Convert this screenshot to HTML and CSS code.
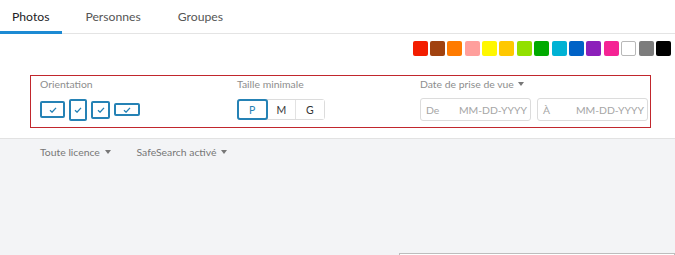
FILE: index.html
```html
<!DOCTYPE html>
<html lang="fr">
<head>
    <meta charset="UTF-8">
    <title>Recherche - Photos</title>
    <link rel="stylesheet" href="styles.css">
</head>
<body>

    <nav class="tabs">
        <a href="#" class="tab active">Photos</a>
        <a href="#" class="tab">Personnes</a>
        <a href="#" class="tab">Groupes</a>
    </nav>

    <!-- Color filter -->
    <div class="colors">
        <span class="swatch" style="background:#f31d00"></span>
        <span class="swatch" style="background:#a1420f"></span>
        <span class="swatch" style="background:#ff7b00"></span>
        <span class="swatch" style="background:#ff9f9c"></span>
        <span class="swatch" style="background:#fff700"></span>
        <span class="swatch" style="background:#ffc800"></span>
        <span class="swatch" style="background:#92e000"></span>
        <span class="swatch" style="background:#00aa00"></span>
        <span class="swatch" style="background:#00b2d4"></span>
        <span class="swatch" style="background:#0062c6"></span>
        <span class="swatch" style="background:#8c20ba"></span>
        <span class="swatch" style="background:#f52394"></span>
        <span class="swatch swatch-white"></span>
        <span class="swatch" style="background:#7c7c7c"></span>
        <span class="swatch" style="background:#000000"></span>
    </div>

    <!-- Advanced filters -->
    <div class="filters">
        <div class="group">
            <div class="label">Orientation</div>
            <div class="controls">
                <span class="orient landscape"><svg class="check" viewBox="0 0 9 7"><path d="M1 3.8 L3.4 6 L8 1"/></svg></span>
                <span class="orient portrait"><svg class="check" viewBox="0 0 9 7"><path d="M1 3.8 L3.4 6 L8 1"/></svg></span>
                <span class="orient square"><svg class="check" viewBox="0 0 9 7"><path d="M1 3.8 L3.4 6 L8 1"/></svg></span>
                <span class="orient panorama"><svg class="check" viewBox="0 0 9 7"><path d="M1 3.8 L3.4 6 L8 1"/></svg></span>
            </div>
        </div>
        <div class="group">
            <div class="label">Taille minimale</div>
            <div class="controls">
                <div class="sizes">
                    <button class="size selected">P</button>
                    <button class="size">M</button>
                    <button class="size">G</button>
                </div>
            </div>
        </div>
        <div class="group">
            <div class="label">Date de prise de vue <span class="caret"></span></div>
            <div class="controls dates">
                <div class="date"><span>De</span><span>MM-DD-YYYY</span></div>
                <div class="date"><span>À</span><span>MM-DD-YYYY</span></div>
            </div>
        </div>
    </div>

    <div class="subbar">
        <div class="options">
            <span class="option">Toute licence <span class="caret"></span></span>
            <span class="option">SafeSearch activé <span class="caret"></span></span>
        </div>
        <div class="results"></div>
    </div>

</body>
</html>
```

FILE: styles.css
```css
body {
    font-family: 'Lato', 'Liberation Sans', sans-serif;
    margin: 0;
    padding: 0;
    background: white;
    color: #212124;
    overflow: hidden;
}

/* Tabs */
.tabs {
    display: flex;
    gap: 11px;
    height: 33px;
    border-bottom: 1px solid #e4e4e4;
}

.tab {
    display: flex;
    align-items: center;
    padding: 1px 12px 0 12px;
    font-size: 12.2px;
    color: #555;
    text-decoration: none;
    margin-bottom: -1px;
    border-bottom: 3px solid transparent;
}

.tab:first-child {
    padding-right: 13px;
}

.tab:nth-child(2) {
    padding-right: 14px;
}

.tab.active {
    color: #212124;
    border-bottom-color: #1c8ad3;
}

/* Colors */
.colors {
    display: flex;
    justify-content: flex-end;
    gap: 2.4px;
    margin-top: 7px;
    padding-right: 4px;
}

.swatch {
    width: 15px;
    height: 15px;
    border-radius: 2px;
    box-sizing: border-box;
}

.swatch-white {
    background: white;
    border: 1px solid #b8b8b8;
}

/* Filters */
.filters {
    display: grid;
    grid-template-columns: 197px 183px auto;
    box-sizing: border-box;
    width: 621px;
    margin: 19px 0 0 30px;
    padding: 2px 0 6px 9px;
    border: 1px solid #c1272d;
}

.label {
    font-size: 10.4px;
    line-height: 13px;
    color: #8d8d8d;
    height: 13px;
}

.controls {
    display: flex;
    align-items: center;
    gap: 4px;
    height: 23px;
    margin-top: 7px;
}

.orient {
    display: flex;
    align-items: center;
    justify-content: center;
    box-sizing: border-box;
    border: 2px solid #2582b5;
    border-radius: 2px;
}

.check {
    width: 8px;
    height: 6px;
    fill: none;
    stroke: #2582b5;
    stroke-width: 1.6;
}

.landscape { width: 25px; height: 17px; }
.portrait { width: 18px; height: 22px; }
.square { width: 19px; height: 18px; }
.panorama { width: 26px; height: 13px; }

.sizes {
    display: flex;
    border: 1px solid #dcdcdc;
    border-radius: 3px;
    height: 21px;
    box-sizing: border-box;
}

.size {
    width: 28.5px;
    padding: 0;
    font-family: inherit;
    font-size: 10.5px;
    background: white;
    color: #333;
    border: none;
    border-left: 1px solid #e2e2e2;
    cursor: pointer;
}

.size:first-child {
    border-left: none;
}

.size.selected {
    color: #2582b5;
    outline: 2px solid #2582b5;
    outline-offset: -1px;
    border-radius: 2px;
    position: relative;
}

.dates {
    gap: 6px;
}

.date {
    display: flex;
    justify-content: space-between;
    align-items: center;
    box-sizing: border-box;
    width: 111px;
    height: 23px;
    padding: 0 3px 0 5px;
    border: 1px solid #dcdcdc;
    border-radius: 3px;
    font-size: 10.4px;
    color: #a5a5a5;
}

.caret {
    display: inline-block;
    width: 0;
    height: 0;
    border-left: 3.5px solid transparent;
    border-right: 3.5px solid transparent;
    border-top: 4px solid #777;
    vertical-align: 2px;
    margin-left: 2px;
}

/* Sub bar */
.subbar {
    margin-top: 10px;
    border-top: 1px solid #e2e2e2;
    background: #f3f4f6;
    height: 117px;
    overflow: hidden;
}

.options {
    display: flex;
    gap: 26px;
    padding: 7px 0 0 40px;
    font-size: 10.4px;
    line-height: 13px;
    color: #777;
}

.results {
    margin: 94px 0 0 399px;
    height: 40px;
    background: white;
    border: 1px solid #bdbdbd;
}
```
